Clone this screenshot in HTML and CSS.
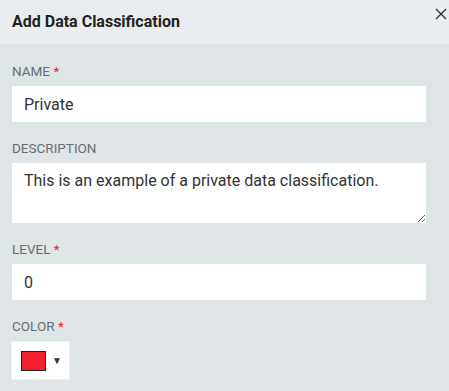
FILE: index.html
```html
<!DOCTYPE html>
<html>
<head>
<meta charset="utf-8">
<link rel="stylesheet" href="styles.css">
</head>
<body>
<div class="modal">
  <div class="header">
    <h1 class="title">Add Data Classification</h1>
    <button class="close" aria-label="Close">
      <svg width="12" height="12" viewBox="0 0 12 12"><path d="M1 1L11 11M11 1L1 11" stroke="#333" stroke-width="1.4" fill="none"/></svg>
    </button>
  </div>
  <div class="form">
    <div class="field">
      <label class="label">NAME <span class="req">*</span></label>
      <input class="input" type="text" value="Private">
    </div>
    <div class="field">
      <label class="label">DESCRIPTION</label>
      <textarea class="textarea">This is an example of a private data classification.</textarea>
    </div>
    <div class="field">
      <label class="label">LEVEL <span class="req">*</span></label>
      <input class="input" type="text" value="0">
    </div>
    <div class="field">
      <label class="label">COLOR <span class="req">*</span></label>
      <div class="picker">
        <span class="swatch"></span>
        <span class="caret">&#9660;</span>
      </div>
    </div>
  </div>
</div>
</body>
</html>
```
FILE: styles.css
```css
html, body {
  margin: 0;
  padding: 0;
}
body {
  font-family: Roboto, "Liberation Sans", sans-serif;
  background: #dfe4e7;
  width: 449px;
  height: 391px;
  overflow: hidden;
}
.modal {
  display: flex;
  flex-direction: column;
}
.header {
  height: 44px;
  background: #e9edf0;
  display: flex;
  align-items: flex-start;
  justify-content: space-between;
  padding-left: 12px;
  box-sizing: border-box;
}
.title {
  margin: 0;
  font-size: 16px;
  font-weight: 700;
  color: #222;
  line-height: 43px;
}
.close {
  border: 0;
  background: transparent;
  padding: 0;
  margin: 8px 2px 0 0;
  width: 12px;
  height: 12px;
  display: flex;
}
.form {
  padding: 19px 23px 0 12px;
  display: flex;
  flex-direction: column;
  gap: 18px;
}
.field {
  display: flex;
  flex-direction: column;
  gap: 7px;
}
.label {
  font-size: 13.5px;
  line-height: 16px;
  color: #6a6e72;
}
.req {
  color: #f0232f;
}
.input, .textarea {
  display: block;
  box-sizing: border-box;
  width: 414px;
  border: 0;
  outline: none;
  background: #fff;
  font-family: Roboto, "Liberation Sans", sans-serif;
  font-size: 16px;
  color: #333;
  padding: 0 12px;
  margin: 0;
}
.input {
  height: 36px;
}
.textarea {
  height: 60px;
  padding: 8px 12px;
  resize: vertical;
  line-height: normal;
}
.picker {
  box-sizing: border-box;
  width: 59px;
  height: 39px;
  background: #fff;
  border: 1px solid #eef1f3;
  display: flex;
  align-items: center;
  padding-left: 9px;
  gap: 6px;
  margin-left: -1px;
}
.swatch {
  box-sizing: border-box;
  width: 25px;
  height: 20px;
  background: #f21f2f;
  border: 1px solid #222;
}
.caret {
  font-size: 10px;
  color: #333;
  line-height: 10px;
}
```
